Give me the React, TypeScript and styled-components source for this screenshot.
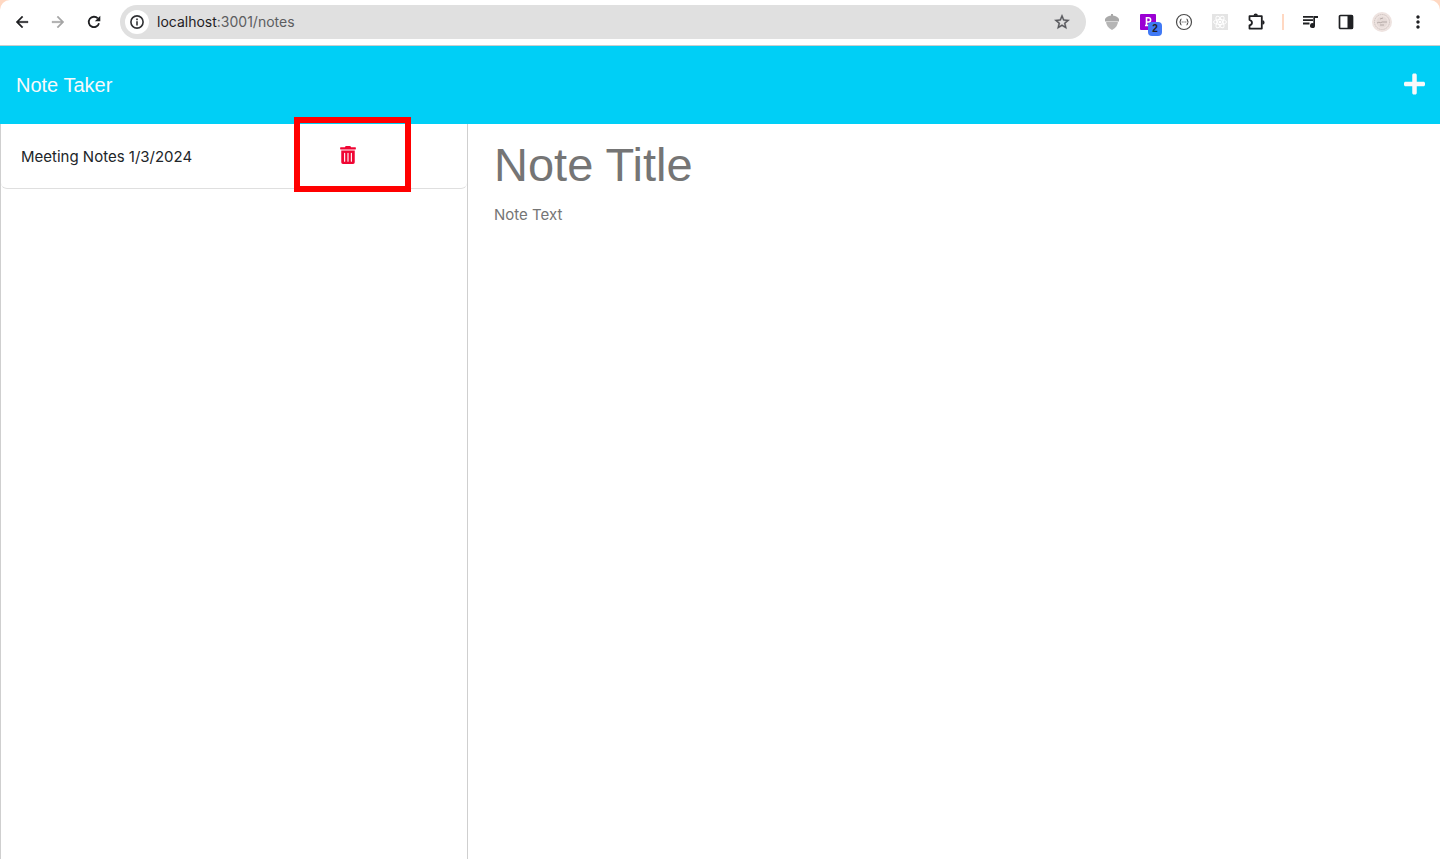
import React, { useState } from "react";
import styled, { createGlobalStyle } from "styled-components";
import { MdArrowBack, MdArrowForward, MdStarBorder, MdMoreVert } from "react-icons/md";
import { FaPlus, FaTrashAlt } from "react-icons/fa";

const GlobalStyle = createGlobalStyle`
  * { box-sizing: border-box; }
  html, body, #root { height: 100%; }
  body {
    margin: 0;
    background: #ffd8c2;
    color: #212529;
    font: 16px/24px Inter, "Liberation Sans", sans-serif;
  }
  svg { display: block; }
`;

const Window = styled.div`
  display: flex;
  flex-direction: column;
  min-height: 100vh;
  background: #fff;
  border-radius: 10px 10px 0 0;
`;

const Toolbar = styled.div`
  display: flex;
  align-items: center;
  height: 46px;
  padding: 0 4px 1px;
  border-bottom: 1px solid #c9cdce;
`;

const ToolButton = styled.button<{ $dim?: boolean; $bold?: boolean }>`
  position: relative;
  display: flex;
  align-items: center;
  justify-content: center;
  flex: none;
  width: 36px;
  height: 36px;
  padding: 0;
  border: 0;
  background: none;
  color: ${(p) => (p.$dim ? "#a5a5a5" : "#1f2023")};
  svg { stroke-width: ${(p) => (p.$bold ? ".5" : "0")}; }
  svg path[fill="none"] { stroke: ${(p) => (p.$bold ? "none" : "currentColor")}; }
`;

const AddressBar = styled.div`
  display: flex;
  align-items: center;
  flex: 1;
  height: 34px;
  margin: 0 8px;
  padding: 0 6px 0 5px;
  border-radius: 17px;
  background: #e0e0e0;
`;

const SiteInfo = styled.button`
  display: flex;
  align-items: center;
  justify-content: center;
  width: 24px;
  height: 24px;
  padding: 0;
  border: 0;
  border-radius: 50%;
  background: #fff;
  color: #303134;
`;

const Url = styled.span`
  flex: 1;
  padding-left: 8px;
  color: #5c5d5f;
  font-size: 14px;
  line-height: 20px;
`;

const Host = styled.span`
  color: #1f2023;
`;

const StarButton = styled(ToolButton)`
  color: #55565a;
`;

const Badge = styled.span`
  position: absolute;
  right: 4px;
  bottom: 4px;
  width: 14px;
  height: 14px;
  border-radius: 4px;
  background: #4079f5;
  color: #1f2023;
  font-size: 10px;
  font-weight: 700;
  line-height: 14px;
`;

const Divider = styled.span`
  width: 2px;
  height: 16px;
  margin: 0 8px;
  background: #ffd8c2;
`;

const Navbar = styled.header`
  display: flex;
  align-items: center;
  justify-content: space-between;
  height: 78px;
  padding: 0 15px 0 16px;
  background: #00cff6;
`;

const Brand = styled.a`
  color: #f8f9fa;
  font-family: "Liberation Sans", Arial, sans-serif;
  font-size: 20px;
  line-height: 30px;
  text-decoration: none;
`;

const AddButton = styled.button`
  padding: 0 0 2px;
  border: 0;
  background: none;
  color: #f8f9fa;
  svg { width: 21px; height: 24px; }
`;

const Main = styled.main`
  display: grid;
  grid-template-columns: 32.5% 1fr;
  flex: 1;
`;

const Sidebar = styled.aside`
  border: solid #cfcfcf;
  border-width: 0 1px;
`;

const NoteList = styled.ul`
  margin: 0;
  padding: 0;
  list-style: none;
`;

const NoteItem = styled.li`
  display: flex;
  align-items: center;
  justify-content: space-between;
  height: 65px;
  padding: 0 111px 0 20px;
  border-bottom: 1px solid #dfdfdf;
  border-radius: 0 0 6px 6px;
`;

const NoteName = styled.span`
  padding-top: 1px;
  font-size: 15px;
`;

const DeleteButton = styled.button`
  position: relative;
  padding: 0 0 2px;
  border: 0;
  background: none;
  color: #f00634;
  svg { width: 16px; height: 18px; }
`;

const Highlight = styled.span`
  position: absolute;
  top: -29px;
  left: -46px;
  width: 117px;
  height: 75px;
  border: 6px solid #f00;
  pointer-events: none;
`;

const Editor = styled.form`
  display: flex;
  flex-direction: column;
  padding: 8px 26px;
`;

const TitleInput = styled.input`
  width: 100%;
  height: 64px;
  padding: 0;
  border: 0;
  outline: 0;
  background: none;
  color: #212529;
  font: 47px/60px "Liberation Sans", Arial, sans-serif;
  &::placeholder { color: #757575; opacity: 1; }
`;

const TextInput = styled.textarea`
  flex: 1;
  width: 100%;
  padding: 7px 0;
  border: 0;
  outline: 0;
  resize: none;
  background: none;
  color: #212529;
  font: 15px/24px Inter, "Liberation Sans", sans-serif;
  &::placeholder { color: #757575; opacity: 1; }
`;

const ReloadIcon = () => (
  <svg width="16" height="16" viewBox="0 0 16 16">
    <path d="M13 9.300A5.200 5.200 0 1 1 11.800 4.400" fill="none" style={{ strokeWidth: 1.8 }} />
    <path d="M14.300 1.800v5.500H8.800z" fill="currentColor" />
  </svg>
);

const InfoIcon = () => (
  <svg width="14" height="14" viewBox="0 0 14 14">
    <circle cx="7" cy="7" r="6.100" fill="none" stroke="currentColor" strokeWidth="1.600" />
    <path d="M6.200 6.200h1.600v4.200H6.200zM6.200 3.600h1.600v1.600H6.200z" fill="currentColor" />
  </svg>
);

const AcornIcon = () => (
  <svg width="16" height="18" viewBox="0 0 16 18">
    <path d="M2 8h12c0 4-2 7-6 9-4-2-6-5-6-9z" fill="#b5b5b5" />
    <path d="M1 8V6c1-2 3-3 6-3.500V1h2v1.500C12 3 14 4 15 6v2z" fill="#a9a9a9" />
    <path d="M1 8h14v1H1z" fill="#d5d5d5" />
  </svg>
);

const PurpleIcon = () => (
  <svg width="16" height="16" viewBox="0 0 16 16">
    <rect width="16" height="16" rx="1" fill="#9b00d3" />
    <path d="M6.500 11.500V3.800h2a2 2 0 0 1 0 4.200h-2M5 11.500h5" fill="none" style={{ stroke: "#fff", strokeWidth: 1.6 }} />
  </svg>
);

const BracesIcon = () => (
  <svg width="18" height="18" viewBox="0 0 18 18" fill="none" stroke="#4a4a4a" style={{ strokeWidth: 1.2 }}>
    <circle cx="9" cy="9" r="7.500" />
    <path d="M6.500 6c-1.500 0-.5 3-2 3 1.500 0 .5 3 2 3M11.500 6c1.500 0 .5 3 2 3-1.500 0-.5 3-2 3" />
    <path d="M6.700 9h1M8.500 9h1M10.300 9h1" />
  </svg>
);

const AtomIcon = () => (
  <svg width="16" height="16" viewBox="0 0 16 16" style={{ strokeWidth: 1 }}>
    <rect width="16" height="16" fill="#e4e4e4" />
    <g fill="none" stroke="#fff">
      <ellipse cx="8" cy="8" rx="6.500" ry="2.500" />
      <ellipse cx="8" cy="8" rx="6.500" ry="2.500" transform="rotate(60 8 8)" />
      <ellipse cx="8" cy="8" rx="6.500" ry="2.500" transform="rotate(120 8 8)" />
    </g>
    <circle cx="8" cy="8" r="1.300" fill="#fff" />
  </svg>
);

const PuzzleIcon = () => (
  <svg width="20" height="20" viewBox="0 0 20 20">
    <path d="M3.500 4.200h12.300v12.400H3.500v-3.300c3.300-.8 3.300-4.500 0-5.300z" fill="none" strokeLinejoin="round" style={{ strokeWidth: 1.8 }} />
    <path d="M7.500 3.700a2.200 2.200 0 0 1 4.400 0zM16.400 8.200a2.200 2.200 0 0 1 0 4.400z" fill="currentColor" />
  </svg>
);

const QueueIcon = () => (
  <svg width="18" height="18" viewBox="0 0 18 18" fill="currentColor">
    <path d="M2 3h10v1.800H2zM2 6.300h10v1.800H2zM2 9.600h6.500v1.800H2z" />
    <path d="M12.300 3H17v2h-3v7.500a2.500 2.500 0 1 1-1.700-2.300z" />
  </svg>
);

const PanelIcon = () => (
  <svg width="16" height="16" viewBox="0 0 16 16">
    <rect x="1.500" y="1.500" width="13" height="13" rx="1" fill="none" stroke="currentColor" style={{ strokeWidth: 1.7 }} />
    <path d="M9.500 1h5v14h-5z" fill="currentColor" />
  </svg>
);

const AvatarIcon = () => (
  <svg width="20" height="20" viewBox="0 0 20 20" fill="none" style={{ strokeWidth: 1 }}>
    <circle cx="10" cy="10" r="10" fill="#eee3e0" />
    <circle cx="10" cy="10" r="7.500" stroke="#cdc3c0" strokeDasharray="1.500 .7" />
    <circle cx="10" cy="10" r="5.500" fill="#e5dad7" />
    <path d="M5 11c3-2 3 1 5-1h5M8 7l3-1M8 13h4" stroke="#b5aaa7" />
  </svg>
);

export default function App() {
  const [title, setTitle] = useState("");
  const [text, setText] = useState("");
  return (
    <>
      <GlobalStyle />
      <Window>
        <Toolbar>
          <ToolButton aria-label="Back" $bold><MdArrowBack size={18} /></ToolButton>
          <ToolButton aria-label="Forward" $dim $bold><MdArrowForward size={18} /></ToolButton>
          <ToolButton aria-label="Reload"><ReloadIcon /></ToolButton>
          <AddressBar>
            <SiteInfo aria-label="Site information"><InfoIcon /></SiteInfo>
            <Url><Host>localhost</Host>:3001/notes</Url>
            <StarButton aria-label="Bookmark" $bold><MdStarBorder size={18} /></StarButton>
          </AddressBar>
          <ToolButton aria-label="Acorn extension"><AcornIcon /></ToolButton>
          <ToolButton aria-label="Reader extension"><PurpleIcon /><Badge>2</Badge></ToolButton>
          <ToolButton aria-label="Code extension"><BracesIcon /></ToolButton>
          <ToolButton aria-label="React extension"><AtomIcon /></ToolButton>
          <ToolButton aria-label="Extensions"><PuzzleIcon /></ToolButton>
          <Divider />
          <ToolButton aria-label="Media"><QueueIcon /></ToolButton>
          <ToolButton aria-label="Side panel"><PanelIcon /></ToolButton>
          <ToolButton aria-label="Profile"><AvatarIcon /></ToolButton>
          <ToolButton aria-label="Menu"><MdMoreVert size={20} /></ToolButton>
        </Toolbar>
        <Navbar>
          <Brand href="/">Note Taker</Brand>
          <AddButton aria-label="New note"><FaPlus /></AddButton>
        </Navbar>
        <Main>
          <Sidebar>
            <NoteList>
              <NoteItem>
                <NoteName>Meeting Notes 1/3/2024</NoteName>
                <DeleteButton aria-label="Delete note">
                  <FaTrashAlt />
                  <Highlight />
                </DeleteButton>
              </NoteItem>
            </NoteList>
          </Sidebar>
          <Editor>
            <TitleInput aria-label="Note title" placeholder="Note Title" value={title} onChange={(e) => setTitle(e.target.value)} />
            <TextInput aria-label="Note text" placeholder="Note Text" value={text} onChange={(e) => setText(e.target.value)} />
          </Editor>
        </Main>
      </Window>
    </>
  );
}
